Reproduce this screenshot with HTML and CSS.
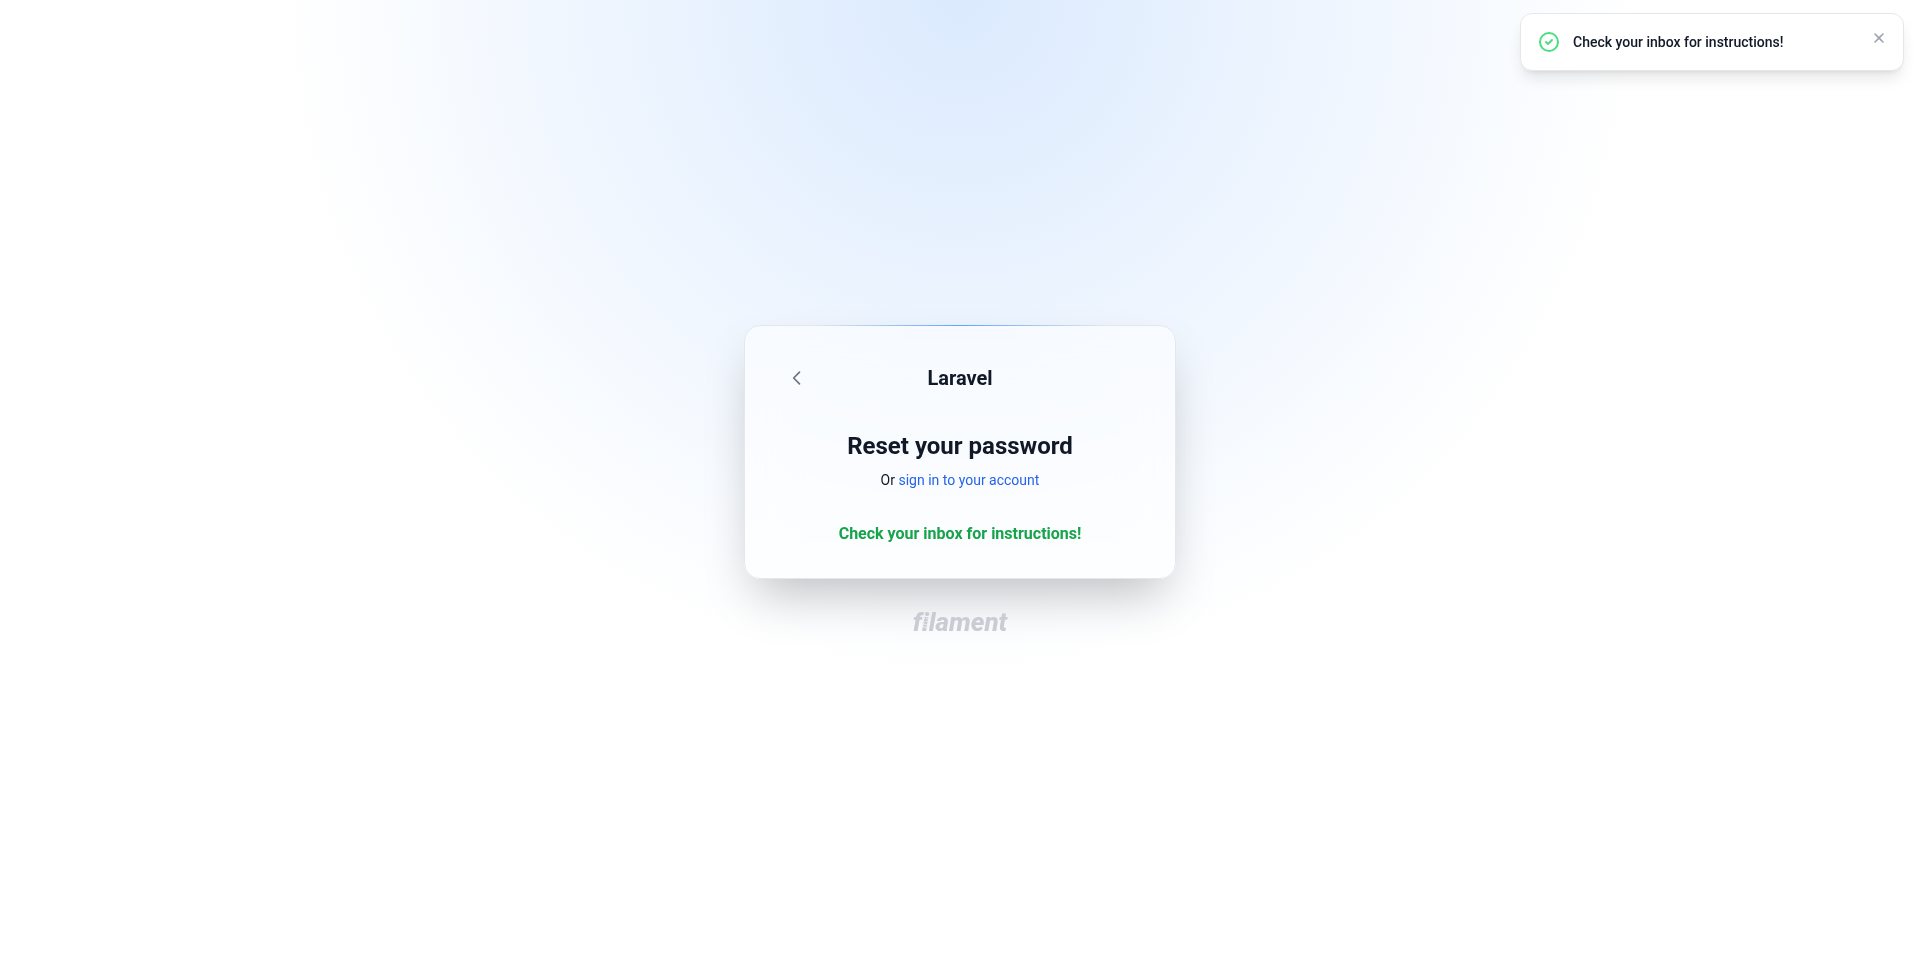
FILE: index.html
```html
<!DOCTYPE html>
<html lang="en">
<head>
<meta charset="utf-8">
<meta name="viewport" content="width=device-width, initial-scale=1">
<title>Reset your password - Laravel</title>
<link rel="stylesheet" href="styles.css">
</head>
<body>
<main class="page">
  <section class="card">
    <header class="card-header">
      <a class="back" href="#" aria-label="Back">
        <svg class="icon-md" viewBox="0 0 24 24" fill="none" stroke="currentColor" stroke-width="2" stroke-linecap="round" stroke-linejoin="round"><path d="M15 19l-7-7 7-7"/></svg>
      </a>
      <div class="brand">Laravel</div>
    </header>
    <div class="heading">
      <h1 class="title">Reset your password</h1>
      <p class="subtitle">Or <a class="link" href="#">sign in to your account</a></p>
    </div>
    <p class="success">Check your inbox for instructions!</p>
  </section>
  <footer class="footer">
    <a class="logo" href="#">filament<svg class="threads" viewBox="0 0 8 16" fill="none" stroke="currentColor" stroke-width="1"><path d="M0 3L3 4.500M0 6L3 7.500M0 9L3 10.500M0 12L3 13.500M4 4L8 6M4 7L8 9M3 10L7 12M3 13L6 14.500"/></svg></a>
  </footer>
</main>
<div class="toasts" role="status">
  <div class="toast">
    <svg class="icon-lg" viewBox="0 0 24 24" fill="none" stroke="currentColor" stroke-width="2" stroke-linecap="round" stroke-linejoin="round"><path d="M9 12l2 2 4-4m6 2a9 9 0 11-18 0 9 9 0 0118 0z"/></svg>
    <p class="toast-title">Check your inbox for instructions!</p>
    <button class="close" type="button" aria-label="Close">
      <svg class="icon-sm" viewBox="0 0 20 20" fill="currentColor"><path fill-rule="evenodd" d="M4.293 4.293a1 1 0 011.414 0L10 8.586l4.293-4.293a1 1 0 111.414 1.414L11.414 10l4.293 4.293a1 1 0 01-1.414 1.414L10 11.414l-4.293 4.293a1 1 0 01-1.414-1.414L8.586 10 4.293 5.707a1 1 0 010-1.414z" clip-rule="evenodd"/></svg>
    </button>
  </div>
</div>
</body>
</html>
```
FILE: styles.css
```css
* { box-sizing: border-box; }

body {
  margin: 0;
  color: #111827;
  font-family: Roboto, "Liberation Sans", sans-serif;
  font-size: 16px;
  line-height: 24px;
}

h1, p { margin: 0; }
a { color: inherit; text-decoration: none; }
svg { display: block; flex-shrink: 0; }

.page {
  display: flex;
  flex-direction: column;
  align-items: center;
  justify-content: center;
  gap: 32px;
  min-height: 100vh;
  padding: 48px 8px;
  background: radial-gradient(circle at top, #dbeafe, #fff 50%);
}

.card {
  position: relative;
  display: flex;
  flex-direction: column;
  gap: 32px;
  width: 100%;
  max-width: 432px;
  padding: 32px;
  border: 1px solid #e5e7eb;
  border-radius: 16px;
  background: rgba(255, 255, 255, 0.5);
  box-shadow: 0 25px 50px -12px rgba(0, 0, 0, 0.25);
  -webkit-backdrop-filter: blur(24px);
  backdrop-filter: blur(24px);
}

.card::before {
  content: "";
  position: absolute;
  top: -1px;
  left: 0;
  right: 0;
  width: 288px;
  height: 1px;
  margin: 0 auto;
  background: linear-gradient(to right, #e5e7eb, #60a5fa, #e5e7eb);
}

.card-header {
  display: grid;
  grid-template-columns: 40px 1fr 40px;
  align-items: center;
}

.back {
  display: flex;
  align-items: center;
  justify-content: center;
  height: 40px;
  color: #6b7280;
}

.brand {
  font-size: 20px;
  font-weight: 700;
  line-height: 20px;
  text-align: center;
}

.heading {
  display: flex;
  flex-direction: column;
  gap: 8px;
  text-align: center;
}

.title {
  font-size: 24px;
  font-weight: 700;
  line-height: 32px;
}

.subtitle {
  font-size: 14px;
  line-height: 20px;
}

.link { color: #2563eb; }

.success {
  color: #16a34a;
  font-weight: 700;
  text-align: center;
}

.footer {
  color: #c9ccd4;
  font-size: 26px;
  font-style: italic;
  font-weight: 800;
  font-variant-ligatures: none;
  line-height: 22px;
}

.logo {
  position: relative;
  display: block;
}

.threads {
  position: absolute;
  top: 3px;
  left: 9px;
  width: 8px;
  height: 16px;
  color: #eeeff1;
}

.icon-sm { width: 16px; height: 16px; }
.icon-md { width: 20px; height: 20px; }
.icon-lg { width: 24px; height: 24px; color: #4ade80; }

.toasts {
  position: fixed;
  top: 13px;
  right: 16px;
  width: 384px;
  max-width: calc(100% - 32px);
}

.toast {
  display: flex;
  align-items: flex-start;
  gap: 12px;
  padding: 16px;
  border: 1px solid #e5e7eb;
  border-radius: 12px;
  background: #fff;
  box-shadow: 0 10px 15px -3px rgba(0, 0, 0, 0.1), 0 4px 6px -4px rgba(0, 0, 0, 0.1);
}

.toast-title {
  flex: 1;
  font-size: 14px;
  font-weight: 500;
}

.close {
  padding: 0;
  border: 0;
  background: none;
  color: #9ca3af;
  cursor: pointer;
}
```
